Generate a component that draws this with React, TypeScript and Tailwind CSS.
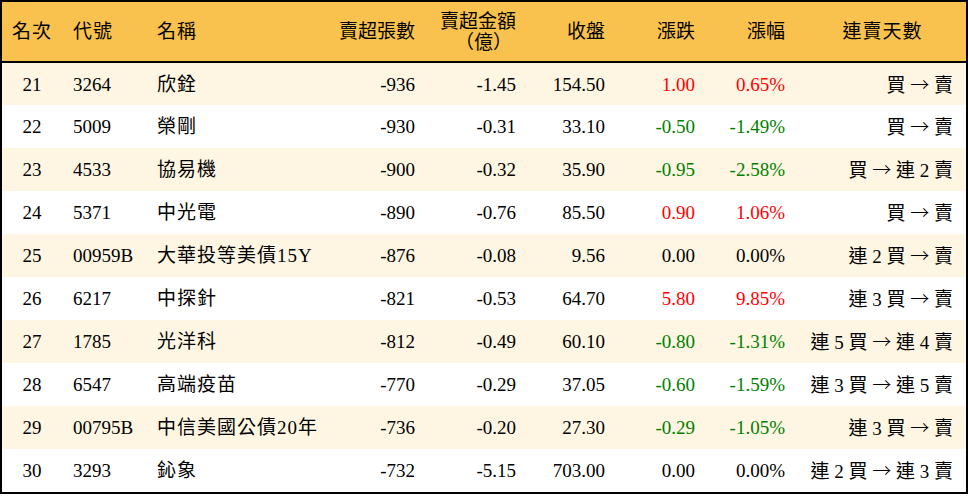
import React from "react";

type Row = {
  rank: string;
  code: string;
  name: string;
  vol: string;
  amt: string;
  close: string;
  chg: string;
  pct: string;
  streak: string;
  color: "red" | "green" | "black";
};

const rows: Row[] = [
  { rank: "21", code: "3264", name: "欣銓", vol: "-936", amt: "-1.45", close: "154.50", chg: "1.00", pct: "0.65%", streak: "買 → 賣", color: "red" },
  { rank: "22", code: "5009", name: "榮剛", vol: "-930", amt: "-0.31", close: "33.10", chg: "-0.50", pct: "-1.49%", streak: "買 → 賣", color: "green" },
  { rank: "23", code: "4533", name: "協易機", vol: "-900", amt: "-0.32", close: "35.90", chg: "-0.95", pct: "-2.58%", streak: "買 → 連 2 賣", color: "green" },
  { rank: "24", code: "5371", name: "中光電", vol: "-890", amt: "-0.76", close: "85.50", chg: "0.90", pct: "1.06%", streak: "買 → 賣", color: "red" },
  { rank: "25", code: "00959B", name: "大華投等美債15Y", vol: "-876", amt: "-0.08", close: "9.56", chg: "0.00", pct: "0.00%", streak: "連 2 買 → 賣", color: "black" },
  { rank: "26", code: "6217", name: "中探針", vol: "-821", amt: "-0.53", close: "64.70", chg: "5.80", pct: "9.85%", streak: "連 3 買 → 賣", color: "red" },
  { rank: "27", code: "1785", name: "光洋科", vol: "-812", amt: "-0.49", close: "60.10", chg: "-0.80", pct: "-1.31%", streak: "連 5 買 → 連 4 賣", color: "green" },
  { rank: "28", code: "6547", name: "高端疫苗", vol: "-770", amt: "-0.29", close: "37.05", chg: "-0.60", pct: "-1.59%", streak: "連 3 買 → 連 5 賣", color: "green" },
  { rank: "29", code: "00795B", name: "中信美國公債20年", vol: "-736", amt: "-0.20", close: "27.30", chg: "-0.29", pct: "-1.05%", streak: "連 3 買 → 賣", color: "green" },
  { rank: "30", code: "3293", name: "鈊象", vol: "-732", amt: "-5.15", close: "703.00", chg: "0.00", pct: "0.00%", streak: "連 2 買 → 連 3 賣", color: "black" },
];

const colorClass = (c: Row["color"]) =>
  c === "red" ? "text-[#ff0000]" : c === "green" ? "text-[#008000]" : "text-black";

function Streak({ text }: { text: string }) {
  const [left, right] = text.split(" → ");
  return (
    <>
      {left}{" "}
      <span style={{ fontFamily: '"Noto Sans CJK TC", sans-serif' }} className="font-light">→</span>{" "}
      {right}
    </>
  );
}

export default function App() {
  return (
    <div
      className="w-[968px] h-[496px] bg-white text-black"
      style={{ fontFamily: '"Liberation Serif", "Noto Sans CJK TC", serif' }}
    >
      <div className="border-2 border-black w-[968px]">
        <table className="table-fixed border-collapse w-[964px] text-[19px] leading-[21px]">
          <colgroup>
            <col className="w-[60px]" />
            <col className="w-[84px]" />
            <col className="w-[178px]" />
            <col className="w-[101px]" />
            <col className="w-[101px]" />
            <col className="w-[89px]" />
            <col className="w-[90px]" />
            <col className="w-[90px]" />
            <col className="w-[171px]" />
          </colgroup>
          <thead>
            <tr className="bg-[#f9c14e] h-[60px] border-b-2 border-black">
              <th className="font-normal text-center align-middle tracking-[1px]">名次</th>
              <th className="font-normal text-left pl-[11px] align-middle tracking-[1px]">代號</th>
              <th className="font-normal text-left pl-[11px] align-middle tracking-[1px]">名稱</th>
              <th className="font-normal text-right pr-[10px] align-middle">賣超張數</th>
              <th className="font-normal text-right pr-[10px] align-middle">
                <div>賣超金額</div>
                <div className="pr-[4px]">（億）</div>
              </th>
              <th className="font-normal text-right pr-[10px] align-middle">收盤</th>
              <th className="font-normal text-right pr-[10px] align-middle">漲跌</th>
              <th className="font-normal text-right pr-[10px] align-middle">漲幅</th>
              <th className="font-normal text-center pl-[4px] align-middle tracking-[1px]">連賣天數</th>
            </tr>
          </thead>
          <tbody>
            {rows.map((r, i) => (
              <tr key={r.rank} className={`h-[43px] ${i % 2 === 0 ? "bg-[#fef6e2]" : "bg-white"}`}>
                <td className="text-center align-middle">{r.rank}</td>
                <td className="text-left pl-[11px] align-middle">{r.code}</td>
                <td className="text-left pl-[11px] align-middle whitespace-nowrap tracking-[1px]">{r.name}</td>
                <td className="text-right pr-[10px] align-middle">{r.vol}</td>
                <td className="text-right pr-[10px] align-middle">{r.amt}</td>
                <td className="text-right pr-[10px] align-middle">{r.close}</td>
                <td className={`text-right pr-[10px] align-middle ${colorClass(r.color)}`}>{r.chg}</td>
                <td className={`text-right pr-[10px] align-middle ${colorClass(r.color)}`}>{r.pct}</td>
                <td className="text-right pr-[13px] align-middle whitespace-nowrap">
                  <Streak text={r.streak} />
                </td>
              </tr>
            ))}
          </tbody>
        </table>
      </div>
    </div>
  );
}
